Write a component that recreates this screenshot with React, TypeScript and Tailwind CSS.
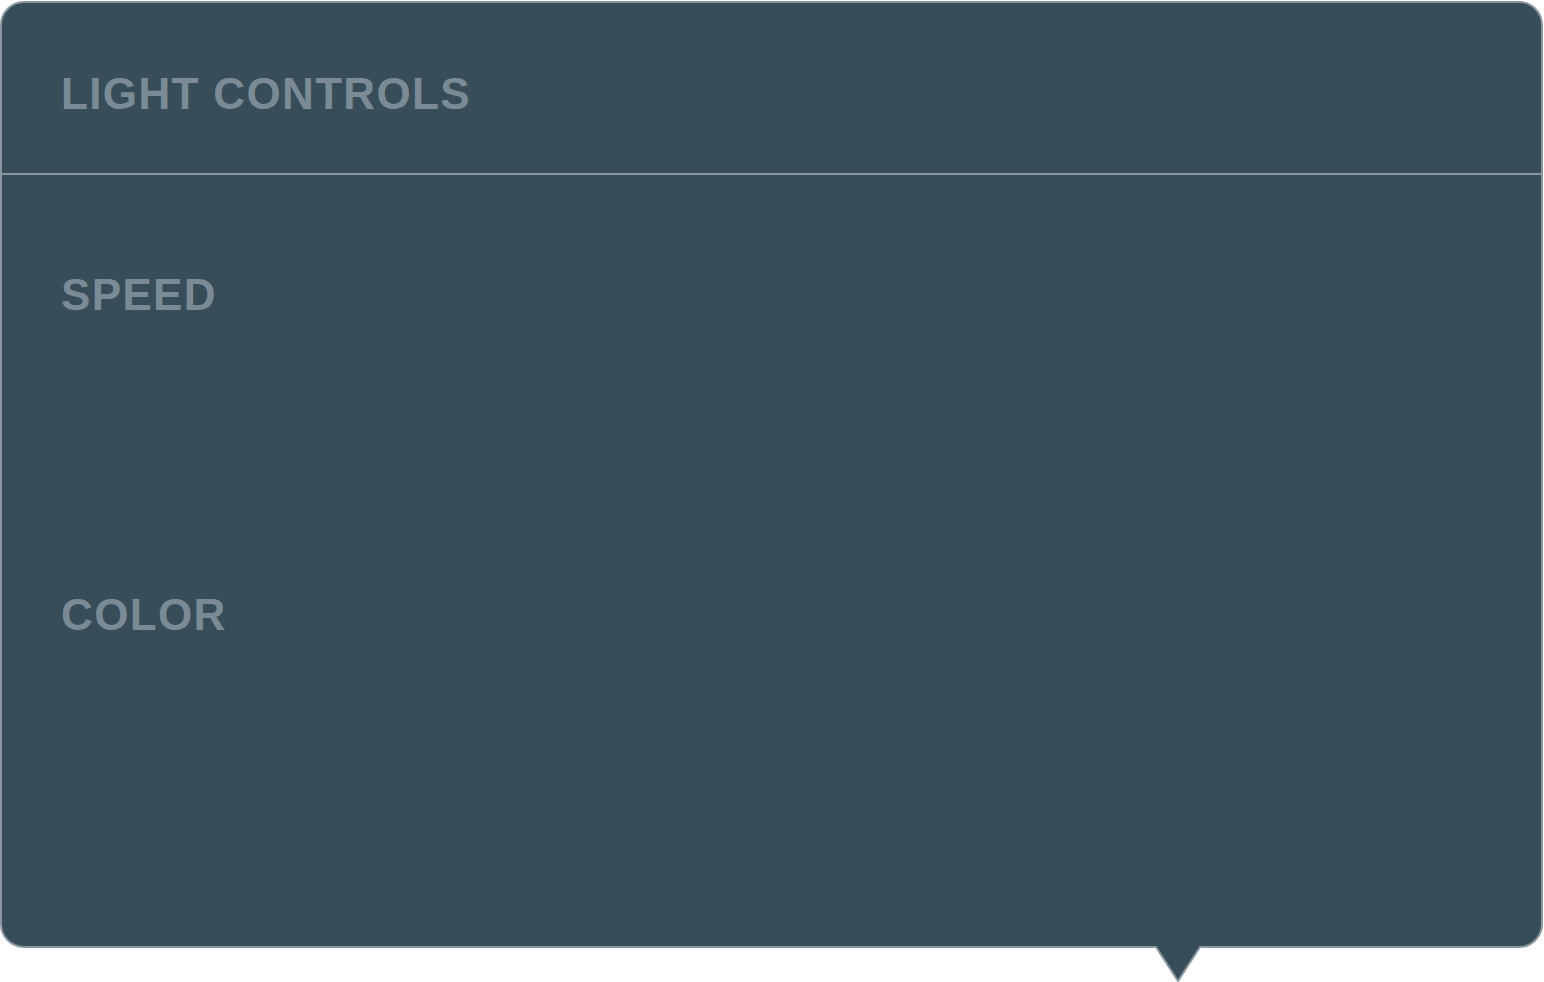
export default function App() {
  return (
    <div className="w-[1544px] h-[982px] bg-white pt-px" style={{ fontFamily: "'Liberation Sans', Arial, sans-serif" }}>
      <div className="relative w-[1543px] h-[947px]">
        <div className="flex flex-col w-full h-full rounded-[24px] border-2 border-[#8a979f] bg-[#374d59] overflow-hidden">
          {/* Header */}
          <div className="h-[172px] shrink-0 border-b-2 border-[#8a979f] pl-[59px] pt-[69px]">
            <h1 className="text-[44px] leading-none font-bold tracking-[1.35px] text-[#7b8b95]">LIGHT CONTROLS</h1>
          </div>

          {/* Body */}
          <div className="flex flex-col pl-[59px] pt-[98px]">
            <h2 className="text-[44px] leading-none font-bold tracking-[1.35px] text-[#7b8b95]">SPEED</h2>
            <div className="h-[276px]" />
            <h2 className="text-[44px] leading-none font-bold tracking-[1.35px] text-[#7b8b95]">COLOR</h2>
          </div>
        </div>

        {/* Pointer */}
        <svg className="absolute left-[1153px] top-[943px]" width="50" height="39" viewBox="0 0 50 39">
          <path d="M2 0 L48 0 L48 3 L47 3 L25 37 L3 3 L2 3 Z" fill="#374d59" />
          <polyline points="1,3 3,3 25,37 47,3 49,3" fill="none" stroke="#8a979f" strokeWidth="2" strokeLinejoin="miter" />
        </svg>
      </div>
    </div>
  );
}
